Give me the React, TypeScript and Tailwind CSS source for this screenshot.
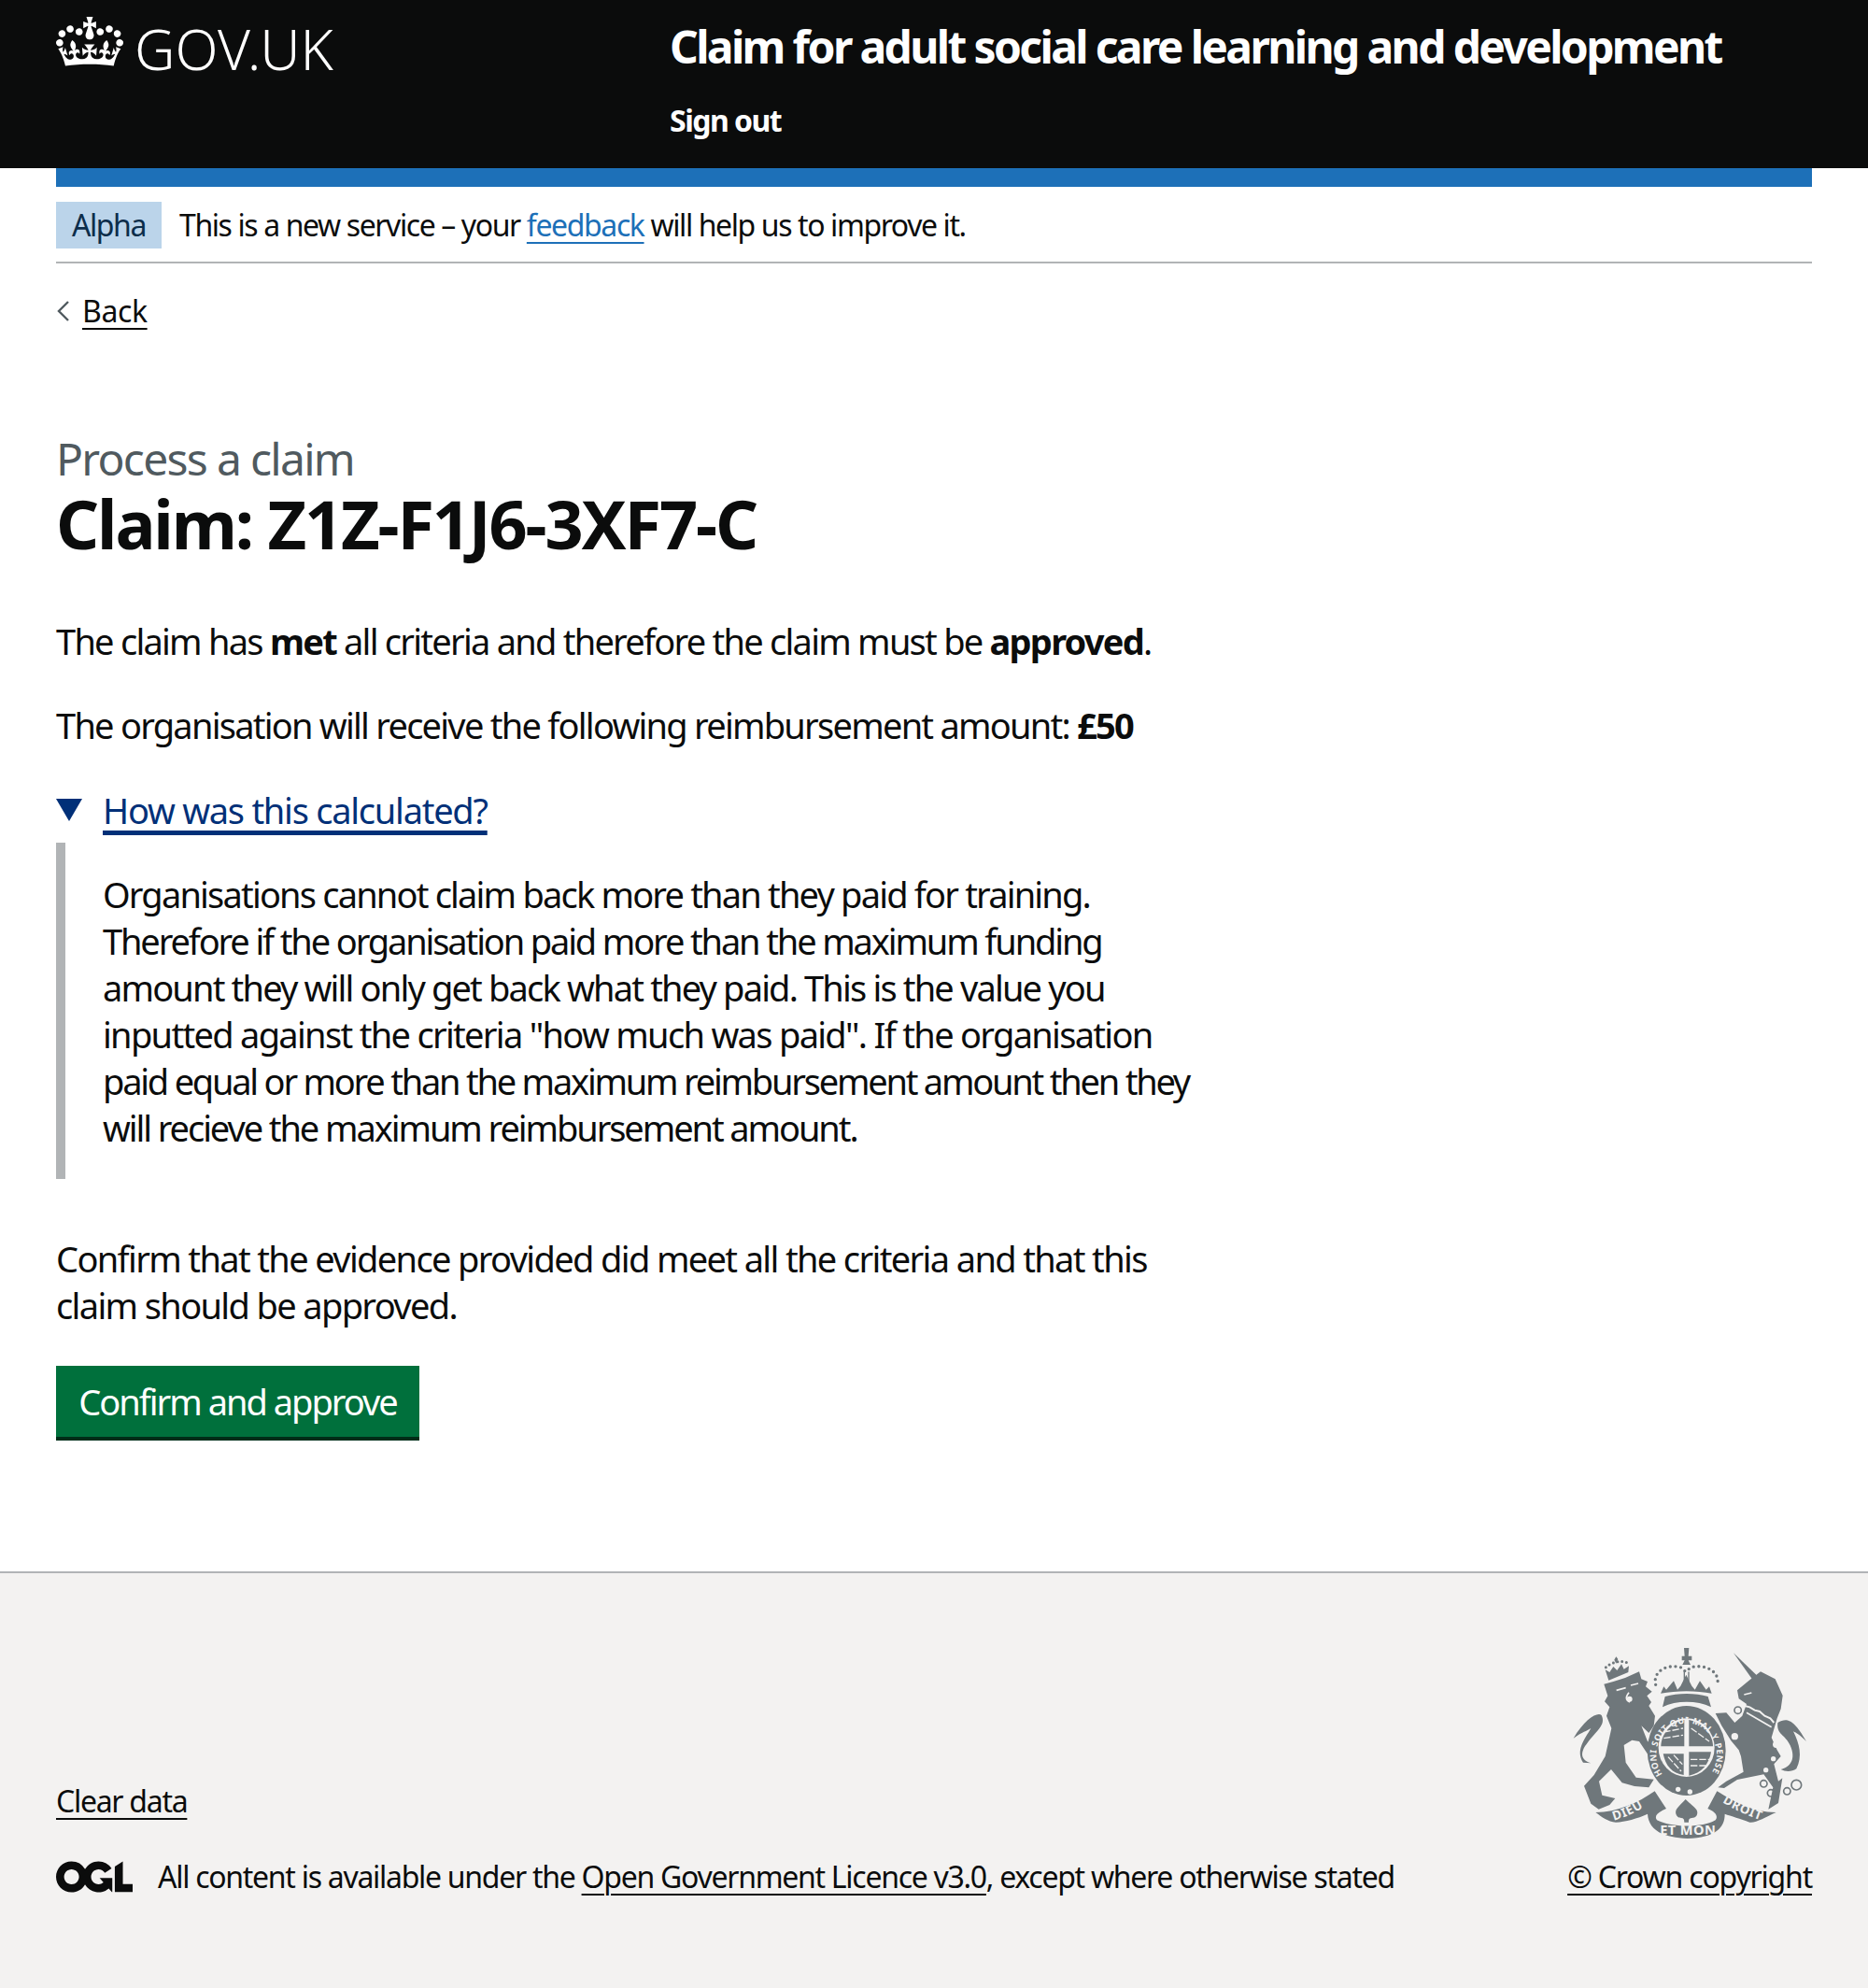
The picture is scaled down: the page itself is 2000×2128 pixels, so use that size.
const fontFamily = "font-['Noto_Sans',sans-serif]";

function Crown() {
  return (
    <svg className="w-[72px] h-[53px] shrink-0" viewBox="0 0 132 97" fill="currentColor">
      <path d="M25 30.2c3.5 1.5 7.7-.2 9.1-3.7 1.5-3.6-.2-7.8-3.9-9.2-3.6-1.4-7.6.3-9.1 3.9-1.4 3.5.3 7.5 3.9 9zM9 39.5c3.6 1.5 7.8-.2 9.2-3.7 1.5-3.6-.2-7.8-3.9-9.1-3.6-1.5-7.6.2-9.1 3.8-1.4 3.5.3 7.5 3.8 9zM4.4 57.2c3.5 1.5 7.7-.2 9.1-3.8 1.5-3.6-.2-7.7-3.9-9.1-3.5-1.5-7.6.3-9.1 3.8-1.4 3.5.3 7.6 3.9 9.1zm38.3-21.4c3.5 1.5 7.7-.2 9.1-3.8 1.5-3.6-.2-7.7-3.9-9.1-3.6-1.5-7.6.3-9.1 3.8-1.3 3.6.4 7.7 3.9 9.1zm64.4-5.6c-3.6 1.5-7.8-.2-9.1-3.7-1.5-3.6.2-7.8 3.8-9.2 3.6-1.4 7.7.3 9.2 3.9 1.3 3.5-.4 7.5-3.9 9zm15.9 9.3c-3.6 1.5-7.7-.2-9.1-3.7-1.5-3.6.2-7.8 3.7-9.1 3.6-1.5 7.7.2 9.2 3.8 1.5 3.5-.3 7.5-3.8 9zm4.7 17.7c-3.6 1.5-7.8-.2-9.2-3.8-1.5-3.6.2-7.7 3.9-9.1 3.6-1.5 7.7.3 9.2 3.8 1.3 3.5-.4 7.6-3.9 9.1zM89.3 35.8c-3.6 1.5-7.8-.2-9.2-3.8-1.4-3.6.2-7.7 3.9-9.1 3.6-1.5 7.7.3 9.2 3.8 1.4 3.6-.3 7.7-3.9 9.1zM69.7 17.7l8.9 4.7V9.3l-8.9 2.8c-.2-.3-.5-.6-.9-.9L72.4 0H59.6l3.6 11.2c-.3.3-.6.5-.9.9l-8.8-2.8v13.1l8.8-4.7c.3.3.6.7.9.9l-5 15.4v.1c-.2.8-.4 1.6-.4 2.4 0 4.1 3.1 7.5 7 8.1h.2c.3 0 .7.1 1 .1.4 0 .7 0 1-.1h.2c4-.6 7.1-4.1 7.1-8.1 0-.8-.1-1.7-.4-2.4V34l-5.1-15.4c.4-.2.7-.6 1-.9zM66 92.8c16.9 0 32.8 1.1 47.1 3.2 4-16.9 8.9-26.7 14-33.5l-9.6-3.4c1 4.9 1.1 7.2 0 10.2-1.5-1.4-3-4.3-4.2-8.7L108.6 76c2.8-2 5-3.2 7.5-3.3-4.4 9.4-10 11.9-13.6 11.2-4.3-.8-6.3-4.6-5.6-7.9 1-4.7 5.7-5.9 8-.5 4.3-8.7-3-11.4-7.6-8.8 7.1-7.2 7.9-13.5 2.1-21.1-8 6.1-8.1 12.3-4.5 20.8-4.7-5.4-12.1-2.5-9.5 6.2 3.4-5.2 7.9-2 7.2 3.1-.6 4.3-6.4 7.8-13.5 7.2-10.3-.9-10.9-8-11.2-13.8 2.5-.5 7.1 1.8 11 7.3L80.2 60c-4.1 4.4-8 5.3-12.3 5.4 1.4-4.4 8-11.6 8-11.6H55.5s6.4 7.2 7.9 11.6c-4.2-.1-8-1-12.3-5.4l1.4 16.4c3.9-5.5 8.5-7.7 10.9-7.3-.3 5.8-.9 12.8-11.1 13.8-7.2.6-12.9-2.9-13.5-7.2-.7-5 3.8-8.3 7.1-3.1 2.7-8.7-4.6-11.6-9.4-6.2 3.7-8.5 3.6-14.7-4.6-20.8-5.8 7.6-5 13.9 2.2 21.1-4.7-2.6-11.9.1-7.7 8.8 2.3-5.5 7.1-4.2 8.1.5.7 3.3-1.3 7.1-5.7 7.9-3.5.7-9-1.8-13.5-11.2 2.5.1 4.7 1.3 7.5 3.3l-4.7-15.4c-1.2 4.4-2.7 7.2-4.3 8.7-1.1-3-.9-5.3 0-10.2l-9.5 3.4c5 6.9 9.9 16.7 14 33.5 14.8-2.1 30.8-3.2 47.7-3.2z" />
    </svg>
  );
}

function OglLogo() {
  return (
    <svg className="w-[82px] h-[34px] shrink-0" viewBox="0 0 483.2 195.7" fill="currentColor">
      <path d="M421.5 142.8V.1l-50.7 32.3v161.1h112.4v-50.7zm-122.3-9.6A47.12 47.12 0 0 1 221 97.8c0-26 21.1-47.1 47.1-47.1 16.7 0 31.4 8.7 39.7 21.8l42.7-27.2A97.63 97.63 0 0 0 268.1 0c-36.5 0-68.3 20.1-85.1 49.7A98 98 0 0 0 97.8 0C43.9 0 0 43.9 0 97.8s43.9 97.8 97.8 97.8c36.5 0 68.3-20.1 85.1-49.7a97.76 97.76 0 0 0 149.6 25.4l19.4 22.2h3v-87.8h-80l24.3 27.5zM97.8 145c-26 0-47.1-21.1-47.1-47.1s21.1-47.1 47.1-47.1 47.2 21 47.2 47S123.8 145 97.8 145" />
    </svg>
  );
}

// Royal arms, hand drawn. Coordinates follow a 3x crop of the reference.
function Crest() {
  const grey = "#6f777b";
  const bg = "#f3f2f1";
  return (
    <svg className="w-[250px] h-[204px]" viewBox="132 72 750 612">
      <g fill={grey}>
        {/* lion */}
        <path d="M232 188 L262 180 L300 168 L345 148 L352 172 L372 180 L366 196 L386 212 L370 226 L384 246 L376 258 L396 290 L392 322 L376 345 L352 322 L372 372 L405 395 L400 425 L385 432 L365 402 L345 372 L322 368 L296 384 L302 440 L335 488 L392 494 L376 520 L330 516 L290 505 L255 462 L216 500 L226 545 L268 555 L250 576 L215 590 L190 572 L168 515 L200 480 L236 420 L256 330 L240 290 L250 262 L234 244 L244 226 Z" />
        <path d="M190 442 C150 430 160 400 178 378 C205 340 240 320 224 288 C212 276 170 300 134 362 C165 340 175 340 190 330 C170 365 140 400 165 440 Z" />
        {/* unicorn */}
        <path d="M648 88 L728 165 L712 178 Z" />
        <path d="M660 208 L700 175 L735 148 L782 172 L806 225 L800 268 L788 298 L770 360 L788 400 L800 420 L778 445 L792 500 L805 490 L792 570 L760 590 L775 520 L745 478 L660 495 L618 522 L598 520 L625 500 L680 470 L672 420 L665 400 L640 370 L610 322 L590 282 L625 280 L652 312 L676 290 L690 252 L665 235 Z" />
        <path d="M790 312 C820 295 840 300 882 372 C860 350 850 345 840 340 C860 380 870 420 850 460 C835 470 815 470 800 462 C830 455 850 430 830 385 C815 350 785 350 790 312 Z" />
        {/* royal crown: band, cross and fleurs; the arches are dots, drawn below */}
        <path d="M428 228 C470 216 525 216 566 228 L576 262 C530 240 465 240 420 262 Z" />
        <path d="M482 98 L491 98 L489 72 L505 72 L503 98 L514 98 L514 112 L503 112 L510 126 L484 126 L491 112 L482 112 Z" />
        <path d="M414 218 L424 196 L432 206 L456 178 L468 206 L478 194 L496 158 L514 194 L524 206 L540 178 L560 206 L570 196 L578 218 C530 208 465 208 414 218 Z" />
        {/* shield ring */}
        <ellipse cx="497" cy="402" rx="126" ry="144" />
        {/* scroll */}
        <path d="M205 600 C275 600 340 570 395 532 L432 588 C405 600 392 610 402 625 C450 650 550 650 590 625 C600 612 590 598 565 588 L595 532 C650 565 710 600 785 600 C750 615 720 635 700 632 C670 620 640 612 620 605 C620 650 590 680 500 684 C410 680 375 650 372 605 C340 620 300 630 270 632 C245 630 225 615 205 600 Z" />
        <path d="M494 558 C475 580 455 590 465 610 C475 625 490 610 490 632 L504 632 C504 610 520 625 530 610 C540 590 515 580 494 558 Z" />
      </g>
      {/* crown arches and the lion's small crown */}
      <g fill="none" stroke={grey} strokeLinecap="round">
        <path d="M398 190 C388 150 430 122 478 134 L494 148 L512 134 C560 122 606 150 596 190" strokeWidth="10" strokeDasharray="0 17" />
        <path d="M490 150 L490 180 M504 150 L504 180" strokeWidth="4" />
        <path d="M238 134 C255 118 295 108 310 122" strokeWidth="9" strokeDasharray="0 14" />
      </g>
      <g fill={grey}>
        <path d="M236 142 L250 150 L262 132 L274 144 L288 124 L296 140 L312 130 L310 150 L247 176 Z" />
        <path d="M265 110 L271 100 L277 108 L271 122 Z" />
      </g>
      {/* cut-outs: lion face, unicorn collar and mouth */}
      <g fill="none" stroke={bg} strokeWidth="5">
        <path d="M272 208 L302 200 M318 192 L342 186" />
        <path d="M312 215 C300 230 302 240 315 246" />
        <path d="M684 258 L700 262 L716 272 L732 276 L748 290 L766 298 L778 312" strokeWidth="6" />
        <path d="M690 280 L770 326" strokeWidth="5" />
        <path d="M682 222 L706 216" />
      </g>
      <circle cx="314" cy="236" r="9" fill={bg} />
      <g>
        <circle cx="662" cy="272" r="11" fill="none" stroke={grey} strokeWidth="5" />
        <circle cx="652" cy="356" r="11" fill={bg} />
        <circle cx="785" cy="382" r="11" fill={bg} />
        <circle cx="776" cy="428" r="8" fill={bg} />
        <circle cx="752" cy="464" r="8" fill={bg} />
        <circle cx="745" cy="508" r="11" fill="none" stroke={grey} strokeWidth="5" />
        <circle cx="768" cy="538" r="11" fill="none" stroke={grey} strokeWidth="5" />
        <circle cx="820" cy="532" r="11" fill="none" stroke={grey} strokeWidth="5" />
        <circle cx="850" cy="512" r="16" fill="none" stroke={grey} strokeWidth="5" />
      </g>
      {/* shield */}
      <ellipse cx="497" cy="392" rx="90" ry="94" fill={bg} />
      <g fill={grey}>
        <path d="M415 388 C415 350 445 312 490 303 L490 388 Z" />
        <path d="M505 303 C550 312 582 350 582 388 L505 388 Z" />
        <path d="M422 412 L488 412 L488 480 C450 476 430 450 422 412 Z" />
        <path d="M505 406 L576 406 C570 445 545 475 505 482 Z" />
      </g>
      <g fill="none" stroke={bg} strokeWidth="4" strokeDasharray="22 6">
        <path d="M424 342 L486 330" />
        <path d="M424 362 L486 352" />
        <path d="M512 330 L570 372" />
        <path d="M510 430 L572 430" />
        <path d="M510 450 L566 450" />
        <path d="M438 422 L480 468" />
        <path d="M456 416 L484 446" />
      </g>
      <circle cx="470" cy="526" r="8" fill={bg} />
      <circle cx="508" cy="534" r="8" fill={bg} />
      <g fill={bg} fontFamily="'Noto Sans',sans-serif" fontWeight="700">
        <defs>
          <path id="garter" d="M420 478 A97 102 0 1 1 574 478" />
          <path id="dieu" d="M264 626 C305 614 345 596 385 566" />
          <path id="droit" d="M612 568 C650 590 695 612 745 628" />
        </defs>
        <text fontSize="28" letterSpacing="1.5">
          <textPath href="#garter">HONI SOIT QUI MAL Y PENSE</textPath>
        </text>
        <text fontSize="40" letterSpacing="2">
          <textPath href="#dieu">DIEU</textPath>
        </text>
        <text fontSize="40" letterSpacing="2">
          <textPath href="#droit">DROIT</textPath>
        </text>
        <text x="412" y="672" fontSize="44" letterSpacing="1">ET MON</text>
      </g>
    </svg>
  );
}

export default function App() {
  return (
    <div className={`${fontFamily} min-h-[2128px] flex flex-col bg-white text-[#0b0c0c] text-[38px] leading-[50px] tracking-[-1.75px]`}>
      {/* Header */}
      <header className="bg-[#0b0c0c] text-white h-[180px] px-[60px] flex shrink-0">
        <div className="w-[657px] pt-[18px] flex items-start shrink-0">
          <Crown />
          <span className="ml-[12px] text-[60px] leading-[70px] font-light -mt-[1px] tracking-normal">GOV.UK</span>
        </div>
        <div className="pt-[18px] flex-1">
          <div className="text-[48px] leading-[63px] font-bold tracking-[-2.65px] whitespace-nowrap">Claim for adult social care learning and development</div>
          <div className="mt-[23px] text-[32px] leading-[50px] font-bold tracking-[-1.5px]">Sign out</div>
        </div>
      </header>

      <main className="px-[60px] flex-1">
        <div className="h-[20px] bg-[#1d70b8]" />

        {/* Phase banner */}
        <div className="h-[82px] border-b-2 border-[#b1b4b6] pt-[16px] flex items-start text-[32px] leading-[50px] tracking-[-1.4px]">
          <span className="h-[50px] w-[113px] bg-[#bbd4ea] text-[#0c2d4a] flex items-center justify-center">Alpha</span>
          <span className="ml-[19px]">
            This is a new service – your{" "}
            <a href="#" className="text-[#1d70b8] underline decoration-2 underline-offset-[6px]">feedback</a>{" "}
            will help us to improve it.
          </span>
        </div>

        {/* Back link */}
        <div className="mt-[26px] flex items-center text-[32px] leading-[50px] tracking-[-0.4px]">
          <svg className="w-[16px] h-[24px] mr-[12px]" viewBox="0 0 16 24" fill="none" stroke="#505a5f" strokeWidth="2.4">
            <path d="M13 2 L3 12 L13 22" />
          </svg>
          <a href="#" className="underline decoration-2 underline-offset-[6px]">Back</a>
        </div>

        <div className="mt-[105px] text-[48px] leading-[56px] text-[#505a5f] tracking-[-1.7px]">Process a claim</div>
        <h1 className="mt-[1px] text-[72px] leading-[80px] font-bold tracking-[-2.15px]">Claim: Z1Z-F1J6-3XF7-C</h1>

        <p className="mt-[61px]">
          The claim has <b>met</b> all criteria and therefore the claim must be <b>approved</b>.
        </p>
        <p className="mt-[40px]">
          The organisation will receive the following reimbursement amount: <b>£50</b>
        </p>

        {/* Details */}
        <div className="mt-[41px] w-[1240px]">
          <div className="flex items-center text-[#003078]">
            <svg className="w-[28px] h-[24px] mr-[22px] shrink-0" viewBox="0 0 28 24" fill="currentColor">
              <path d="M0 0 H28 L14 24 Z" />
            </svg>
            <a href="#" className="underline decoration-[5px] underline-offset-[7px] tracking-[-1.25px]">How was this calculated?</a>
          </div>
          <div className="mt-[10px] border-l-[10px] border-[#b1b4b6] pl-[40px] pt-[30px] pb-[30px] whitespace-nowrap">
            <div className="tracking-[-1.81px]">Organisations cannot claim back more than they paid for training.</div>
            <div className="tracking-[-2.13px]">Therefore if the organisation paid more than the maximum funding</div>
            <div className="tracking-[-1.83px]">amount they will only get back what they paid. This is the value you</div>
            <div className="tracking-[-1.69px]">inputted against the criteria "how much was paid". If the organisation</div>
            <div className="tracking-[-2.22px]">paid equal or more than the maximum reimbursement amount then they</div>
            <div className="tracking-[-2.08px]">will recieve the maximum reimbursement amount.</div>
          </div>
        </div>

        <p className="mt-[60px] w-[1240px] tracking-[-1.64px]">
          Confirm that the evidence provided did meet all the criteria and that this claim should be approved.
        </p>

        <button className="mt-[40px] h-[76px] w-[389px] mb-[4px] bg-[#00703c] text-white shadow-[0_4px_0_#002d18] flex items-center justify-center tracking-[-2px]">
          Confirm and approve
        </button>
      </main>

      {/* Footer */}
      <footer className="mt-[136px] border-t-2 border-[#b1b4b6] bg-[#f3f2f1] h-[446px] px-[60px] pt-[80px] flex justify-between items-start text-[32px] leading-[40px] shrink-0 tracking-[-1.28px]">
        <div className="mt-[144px]">
          <a href="#" className="underline decoration-2 underline-offset-[6px]">Clear data</a>
          <div className="mt-[41px] flex items-center">
            <OglLogo />
            <span className="ml-[27px]">
              All content is available under the{" "}
              <a href="#" className="underline decoration-2 underline-offset-[6px]">Open Government Licence v3.0</a>, except where otherwise stated
            </span>
          </div>
        </div>
        <div className="flex flex-col items-center">
          <Crest />
          <a href="#" className="mt-[21px] underline decoration-2 underline-offset-[6px] tracking-[-1.2px]">© Crown copyright</a>
        </div>
      </footer>
    </div>
  );
}
